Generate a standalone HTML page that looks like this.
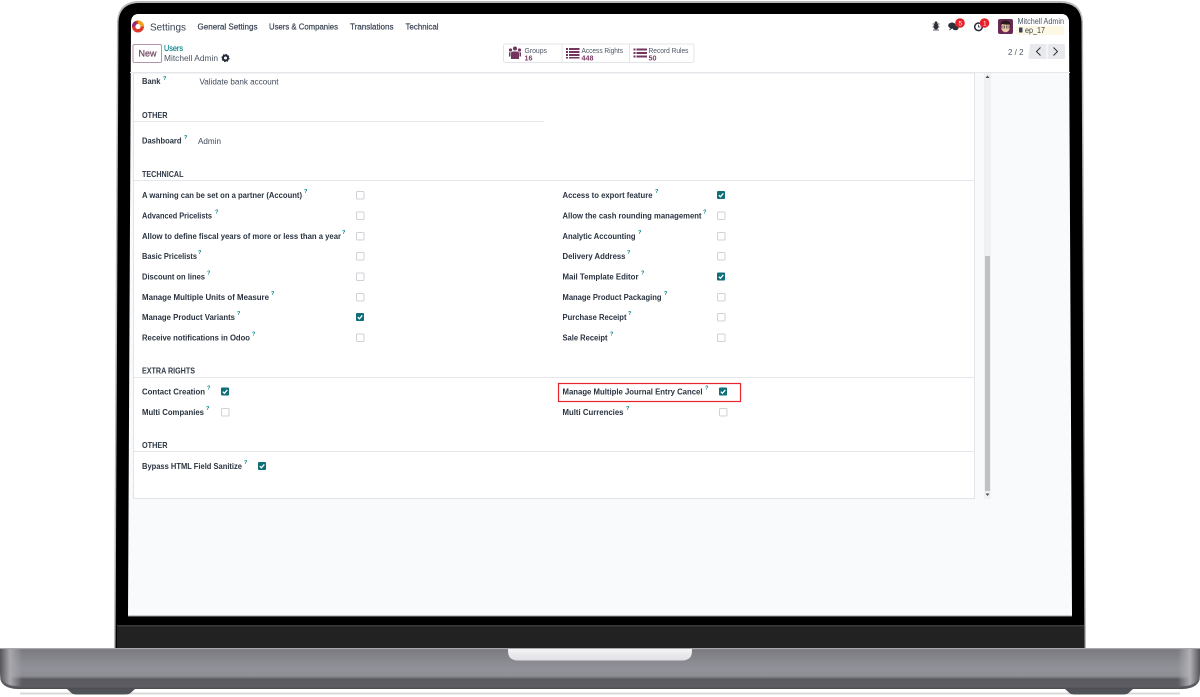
<!DOCTYPE html>
<html><head><meta charset="utf-8"><style>
html,body{margin:0;padding:0;background:#fff;width:1200px;height:697px;overflow:hidden}
svg{display:block}
text{font-family:"Liberation Sans",sans-serif;filter:blur(.22px)}
.l{font-size:8.6px;font-weight:700;fill:#2a3340}
.h{font-size:8.4px;font-weight:700;fill:#2f3947}
.n{font-size:8.6px;fill:#3f4a59}
.q{font-size:5.6px;font-weight:700;fill:#017e84}
.b{fill:#fff;stroke:#cfd2d6;stroke-width:1}
.c{fill:#0f6f78}
.t{fill:none;stroke:#fff;stroke-width:1.3}
</style></head><body>
<svg width="1200" height="697" viewBox="0 0 1200 697" xmlns="http://www.w3.org/2000/svg">
<defs>
<linearGradient id="base" x1="0" y1="0" x2="0" y2="1">
<stop offset="0" stop-color="#77777d"/><stop offset=".1" stop-color="#7f7f85"/><stop offset=".5" stop-color="#92929a"/><stop offset=".68" stop-color="#8d8d94"/><stop offset=".76" stop-color="#5a5a60"/><stop offset=".95" stop-color="#5c5c62"/><stop offset="1" stop-color="#48484c"/>
</linearGradient>
<linearGradient id="endL" x1="0" y1="0" x2="1" y2="0">
<stop offset="0" stop-color="#55555a"/><stop offset=".45" stop-color="#a8a8ad"/><stop offset="1" stop-color="#a8a8ad" stop-opacity="0"/>
</linearGradient>
<linearGradient id="endR" x1="1" y1="0" x2="0" y2="0">
<stop offset="0" stop-color="#55555a"/><stop offset=".45" stop-color="#b0b0b5"/><stop offset="1" stop-color="#b0b0b5" stop-opacity="0"/>
</linearGradient>
<linearGradient id="notch" x1="0" y1="0" x2="0" y2="1">
<stop offset="0" stop-color="#f4f4f6"/><stop offset="1" stop-color="#e0e0e5"/>
</linearGradient>
<g id="ck"><rect x="0" y="0" width="8" height="8" rx="1" class="c"/><path d="M1.8 4.2L3.4 5.8L6.3 2.4" class="t"/></g>
<g id="un"><rect x=".5" y=".5" width="7.500" height="7.500" rx="1" class="b"/></g>
</defs>

<!-- laptop lid -->
<path d="M114 649L117 22Q118 1 140 1H1060Q1082 1 1083 22L1086 649Z" fill="#b8b8bb"/>
<path d="M115.500 649L118.500 22Q119.500 3 140 3H1060Q1080.500 3 1081.500 22L1084.500 649Z" fill="#000"/>
<rect x="117" y="626" width="967" height="22" fill="#222"/>
<rect x="117" y="625" width="967" height="1.500" fill="#3a3a3a"/>

<!-- screen -->
<path d="M128 616L131 22Q131.500 14 139 14H1061Q1068.500 14 1069 22L1072 616Z" fill="#f9fafb"/>
<rect x="128" y="615.500" width="944" height="1" fill="#9a9a9e"/>
<path d="M131 72.500V22Q131.500 14 139 14H1061Q1068.500 14 1069 22V72.500Z" fill="#fff"/>
<rect x="130" y="72" width="940" height="1" fill="#e5e7eb"/>

<!-- sheet -->
<rect x="133.500" y="73" width="841" height="425.500" fill="#fff" stroke="#e2e4e9" stroke-width="1"/>

<!-- scrollbar -->
<rect x="984" y="73" width="7" height="426" fill="#f1f1f1"/>
<rect x="985" y="256" width="5" height="235" fill="#c1c1c1"/>
<path d="M985.500 78L987.500 75.500L989.500 78Z" fill="#505050"/>
<path d="M985.500 493.500L987.500 496L989.500 493.500Z" fill="#505050"/>

<!-- navbar -->
<circle cx="138" cy="26.500" r="4.300" fill="none" stroke="#dc3a2a" stroke-width="3.400"/>
<path d="M138 22.200A4.300 4.300 0 0 1 142.300 26.500" fill="none" stroke="#f2a51f" stroke-width="3.400"/>
<path d="M133.700 26.500A4.300 4.300 0 0 1 136.200 22.600" fill="none" stroke="#8e2a7b" stroke-width="3.400"/>
<text x="150" y="30.500" font-size="10.500" fill="#374151" textLength="36" lengthAdjust="spacingAndGlyphs">Settings</text>
<g font-size="8.600" fill="#374151" font-weight="400" stroke="#374151" stroke-width=".2">
<text x="197.500" y="29.500" textLength="60" lengthAdjust="spacingAndGlyphs">General Settings</text>
<text x="269" y="29.500" textLength="69" lengthAdjust="spacingAndGlyphs">Users &amp; Companies</text>
<text x="350" y="29.500" textLength="43.500" lengthAdjust="spacingAndGlyphs">Translations</text>
<text x="405.500" y="29.500" textLength="33" lengthAdjust="spacingAndGlyphs">Technical</text>
</g>

<!-- new button / breadcrumb -->
<rect x="133" y="44.500" width="28.500" height="18" rx="1.500" fill="#fff" stroke="#b394aa" stroke-width="1"/>
<text x="138.500" y="56.500" font-size="9" fill="#714b67" stroke="#714b67" stroke-width=".25" textLength="18" lengthAdjust="spacingAndGlyphs">New</text>
<text x="164" y="51" font-size="8.500" fill="#017e84" stroke="#017e84" stroke-width=".15" textLength="19" lengthAdjust="spacingAndGlyphs">Users</text>
<text x="164" y="61" font-size="8.700" fill="#4b5563" textLength="54" lengthAdjust="spacingAndGlyphs">Mitchell Admin</text>
<circle cx="225.500" cy="58" r="2.500" fill="none" stroke="#1f2937" stroke-width="2"/>
<circle cx="225.500" cy="58" r="3.600" fill="none" stroke="#1f2937" stroke-width="1" stroke-dasharray="1.400 1.430"/>

<!-- stat buttons -->
<rect x="503.500" y="44" width="190.500" height="18.500" rx="2" fill="#fff" stroke="#e2e4e9"/>
<rect x="561.500" y="44.500" width="1" height="18" fill="#e2e4e9"/>
<rect x="629" y="44.500" width="1" height="18" fill="#e2e4e9"/>
<g fill="#71355e">
<circle cx="515" cy="48.500" r="2"/><circle cx="510.500" cy="50" r="1.600"/><circle cx="519.500" cy="50" r="1.600"/>
<path d="M511 59V53.500Q511 51.500 513 51.500H517Q519 51.500 519 53.500V59Z"/>
<path d="M509 56.500V53Q509 52 510.500 52V56.500Z"/><path d="M521 56.500V53Q521 52 519.500 52V56.500Z"/>
<rect x="566" y="48" width="2" height="2"/><rect x="569" y="48" width="10.500" height="2"/>
<rect x="566" y="51" width="2" height="2"/><rect x="569" y="51" width="10.500" height="2"/>
<rect x="566" y="54" width="2" height="2"/><rect x="569" y="54" width="10.500" height="2"/>
<rect x="566" y="57" width="2" height="1.500"/><rect x="569" y="57" width="10.500" height="1.500"/>
<rect x="633.500" y="48.500" width="2" height="2"/><rect x="636.500" y="48.500" width="10.500" height="2"/>
<rect x="633.500" y="52" width="2" height="2"/><rect x="636.500" y="52" width="10.500" height="2"/>
<rect x="633.500" y="55.500" width="2" height="2"/><rect x="636.500" y="55.500" width="10.500" height="2"/>
</g>
<g font-size="7.300" fill="#4b5563">
<text x="524.500" y="53" textLength="22.500" lengthAdjust="spacingAndGlyphs">Groups</text>
<text x="581.500" y="53" textLength="41.500" lengthAdjust="spacingAndGlyphs">Access Rights</text>
<text x="648.500" y="53" textLength="40" lengthAdjust="spacingAndGlyphs">Record Rules</text>
</g>
<g font-size="7.300" font-weight="700" fill="#7a3a66">
<text x="524.500" y="60.500" textLength="8" lengthAdjust="spacingAndGlyphs">16</text>
<text x="581.500" y="60.500" textLength="12" lengthAdjust="spacingAndGlyphs">448</text>
<text x="648.500" y="60.500" textLength="8" lengthAdjust="spacingAndGlyphs">50</text>
</g>

<!-- systray -->
<g fill="#2c2f36">
<ellipse cx="936" cy="26.500" rx="2.400" ry="3"/><circle cx="936" cy="22.800" r="1.400"/>
<path d="M932.500 24L939.500 24M932.500 27L939.500 27M933 30L939 30" stroke="#2c2f36" stroke-width=".7"/>
<ellipse cx="952" cy="25.500" rx="3.800" ry="3"/><path d="M950 28.500L949 30.500L952.500 28.500Z"/><ellipse cx="955.500" cy="28" rx="3" ry="2.300"/>
</g>
<circle cx="978.500" cy="26.800" r="3.800" fill="none" stroke="#1f2937" stroke-width="1.500"/>
<path d="M978.500 24.800V27H980.500" fill="none" stroke="#1f2937" stroke-width=".8"/>
<circle cx="960" cy="23" r="4.800" fill="#e8202a"/><circle cx="984.500" cy="23" r="4.800" fill="#e8202a"/>
<text x="958.500" y="25.500" font-size="6.500" fill="#fff">5</text>
<text x="983" y="25.500" font-size="6.500" fill="#fff">1</text>
<rect x="998" y="19" width="15" height="15" rx="2" fill="#6a2a55"/>
<ellipse cx="1005.500" cy="27" rx="4.400" ry="5.300" fill="#f0c8a8"/>
<path d="M1000.500 26Q1000 20.500 1005.500 20.500Q1011 20.500 1010.500 26L1009.500 24.500Q1005.500 25 1002 24Z" fill="#2a1a1a"/>
<path d="M1001.800 26H1004.700V28H1001.800ZM1006.300 26H1009.200V28H1006.300Z" fill="none" stroke="#333" stroke-width=".6"/>
<rect x="1016" y="26" width="48" height="9" rx="1" fill="#fdf8e3"/>
<text x="1017.500" y="24" font-size="8" fill="#4b5563" textLength="46.500" lengthAdjust="spacingAndGlyphs">Mitchell Admin</text>
<rect x="1019" y="27.500" width="3.500" height="5" fill="#374151"/>
<text x="1025" y="33" font-size="8" fill="#374151" textLength="20" lengthAdjust="spacingAndGlyphs">ep_17</text>

<!-- pager -->
<text x="1008" y="55" font-size="8.500" fill="#4b5563" textLength="15.500" lengthAdjust="spacingAndGlyphs">2 / 2</text>
<path d="M1030 46Q1028.500 44 1031 44H1063Q1065 44 1065 46V57Q1065 59 1063 59H1031Q1028.500 59 1028.500 57Z" fill="#e7e9ed"/>
<rect x="1046.500" y="44" width="1" height="15" fill="#fff"/>
<path d="M1040.500 47.500L1036.500 51.500L1040.500 55.500" fill="none" stroke="#2c2f36" stroke-width="1"/>
<path d="M1053.500 47.500L1057.500 51.500L1053.500 55.500" fill="none" stroke="#2c2f36" stroke-width="1"/>

<!-- form top -->
<text x="142" y="84" class="l" textLength="18.500" lengthAdjust="spacingAndGlyphs">Bank</text><text x="163" y="80" class="q">?</text>
<text x="199.500" y="84.500" class="n" textLength="79" lengthAdjust="spacingAndGlyphs">Validate bank account</text>

<text x="142" y="118" class="h" textLength="25.500" lengthAdjust="spacingAndGlyphs">OTHER</text>
<rect x="134" y="121" width="410" height="1" fill="#e5e7eb"/>
<text x="142" y="143.500" class="l" textLength="39.500" lengthAdjust="spacingAndGlyphs">Dashboard</text><text x="184" y="139" class="q">?</text>
<text x="198" y="144" class="n" textLength="23" lengthAdjust="spacingAndGlyphs">Admin</text>

<text x="142" y="177" class="h" textLength="41.500" lengthAdjust="spacingAndGlyphs">TECHNICAL</text>
<rect x="134" y="180" width="840" height="1" fill="#e5e7eb"/>

<!-- technical left -->
<text x="142" y="198" class="l" textLength="160" lengthAdjust="spacingAndGlyphs">A warning can be set on a partner (Account)</text><text x="304" y="193" class="q">?</text><use href="#un" x="356" y="191"/>
<text x="142" y="218.500" class="l" textLength="70" lengthAdjust="spacingAndGlyphs">Advanced Pricelists</text><text x="215" y="213.500" class="q">?</text><use href="#un" x="356" y="211.500"/>
<text x="142" y="239" class="l" textLength="199" lengthAdjust="spacingAndGlyphs">Allow to define fiscal years of more or less than a year</text><text x="342" y="234" class="q">?</text><use href="#un" x="356" y="232"/>
<text x="142" y="259" class="l" textLength="55" lengthAdjust="spacingAndGlyphs">Basic Pricelists</text><text x="198" y="254" class="q">?</text><use href="#un" x="356" y="252"/>
<text x="142" y="279.500" class="l" textLength="63" lengthAdjust="spacingAndGlyphs">Discount on lines</text><text x="207" y="274.500" class="q">?</text><use href="#un" x="356" y="272.500"/>
<text x="142" y="300" class="l" textLength="127" lengthAdjust="spacingAndGlyphs">Manage Multiple Units of Measure</text><text x="271" y="295" class="q">?</text><use href="#un" x="356" y="293"/>
<text x="142" y="320" class="l" textLength="93" lengthAdjust="spacingAndGlyphs">Manage Product Variants</text><text x="237" y="315" class="q">?</text><use href="#ck" x="356" y="313"/>
<text x="142" y="340.500" class="l" textLength="108" lengthAdjust="spacingAndGlyphs">Receive notifications in Odoo</text><text x="252" y="335.500" class="q">?</text><use href="#un" x="356" y="333.500"/>

<!-- technical right -->
<text x="562.500" y="198" class="l" textLength="90" lengthAdjust="spacingAndGlyphs">Access to export feature</text><text x="655" y="193" class="q">?</text><use href="#ck" x="717" y="191"/>
<text x="562.500" y="218.500" class="l" textLength="139" lengthAdjust="spacingAndGlyphs">Allow the cash rounding management</text><text x="703" y="213.500" class="q">?</text><use href="#un" x="717" y="211.500"/>
<text x="562.500" y="239" class="l" textLength="73" lengthAdjust="spacingAndGlyphs">Analytic Accounting</text><text x="638" y="234" class="q">?</text><use href="#un" x="717" y="232"/>
<text x="562.500" y="259" class="l" textLength="63" lengthAdjust="spacingAndGlyphs">Delivery Address</text><text x="627" y="254" class="q">?</text><use href="#un" x="717" y="252"/>
<text x="562.500" y="279.500" class="l" textLength="76" lengthAdjust="spacingAndGlyphs">Mail Template Editor</text><text x="641" y="274.500" class="q">?</text><use href="#ck" x="717" y="272.500"/>
<text x="562.500" y="300" class="l" textLength="99" lengthAdjust="spacingAndGlyphs">Manage Product Packaging</text><text x="664" y="295" class="q">?</text><use href="#un" x="717" y="293"/>
<text x="562.500" y="320" class="l" textLength="64" lengthAdjust="spacingAndGlyphs">Purchase Receipt</text><text x="628" y="315" class="q">?</text><use href="#un" x="717" y="313"/>
<text x="562.500" y="340.500" class="l" textLength="45" lengthAdjust="spacingAndGlyphs">Sale Receipt</text><text x="610" y="335.500" class="q">?</text><use href="#un" x="717" y="333.500"/>

<!-- extra rights -->
<text x="142" y="373.500" class="h" textLength="53" lengthAdjust="spacingAndGlyphs">EXTRA RIGHTS</text>
<rect x="134" y="377" width="840" height="1" fill="#e5e7eb"/>
<text x="142" y="394.500" class="l" textLength="63" lengthAdjust="spacingAndGlyphs">Contact Creation</text><text x="207" y="389.500" class="q">?</text><use href="#ck" x="221" y="387.500"/>
<text x="142" y="415" class="l" textLength="62" lengthAdjust="spacingAndGlyphs">Multi Companies</text><text x="206" y="410" class="q">?</text><use href="#un" x="221" y="408"/>
<text x="562.500" y="394.500" class="l" textLength="140" lengthAdjust="spacingAndGlyphs">Manage Multiple Journal Entry Cancel</text><text x="705" y="389.500" class="q">?</text><use href="#ck" x="719" y="387.500"/>
<text x="562.500" y="415" class="l" textLength="61" lengthAdjust="spacingAndGlyphs">Multi Currencies</text><text x="626" y="410" class="q">?</text><use href="#un" x="719" y="408"/>
<rect x="558.500" y="383.500" width="182" height="18" fill="none" stroke="#e8242c" stroke-width="1.200"/>

<!-- other -->
<text x="142" y="448" class="h" textLength="25.500" lengthAdjust="spacingAndGlyphs">OTHER</text>
<rect x="134" y="451" width="840" height="1" fill="#e5e7eb"/>
<text x="142" y="469" class="l" textLength="100" lengthAdjust="spacingAndGlyphs">Bypass HTML Field Sanitize</text><text x="244" y="464" class="q">?</text><use href="#ck" x="258" y="462"/>

<!-- laptop base -->
<path d="M0 648.500H1200V676Q1200 688.500 1182 689H18Q0 688.500 0 676Z" fill="url(#base)"/>
<rect x="0" y="648" width="1200" height="1.200" fill="#a8a8ac"/>
<path d="M0 649H22V686H14Q0 684 0 672Z" fill="url(#endL)"/>
<path d="M1200 649H1178V686H1186Q1200 684 1200 672Z" fill="url(#endR)"/>
<path d="M508 649H692V651Q692 660.500 682 660.500H518Q508 660.500 508 651Z" fill="url(#notch)"/>
<rect x="20" y="692.500" width="1160" height="2" fill="#cfcfcf" opacity=".8"/>
<path d="M67 689H135L130 693.500Q128 694.500 124 694.500H78Q74 694.500 72 693.500Z" fill="#4f5358"/>
<path d="M1065 689H1133L1128 693.500Q1126 694.500 1122 694.500H1076Q1072 694.500 1070 693.500Z" fill="#4f5358"/>
</svg>
</body></html>
